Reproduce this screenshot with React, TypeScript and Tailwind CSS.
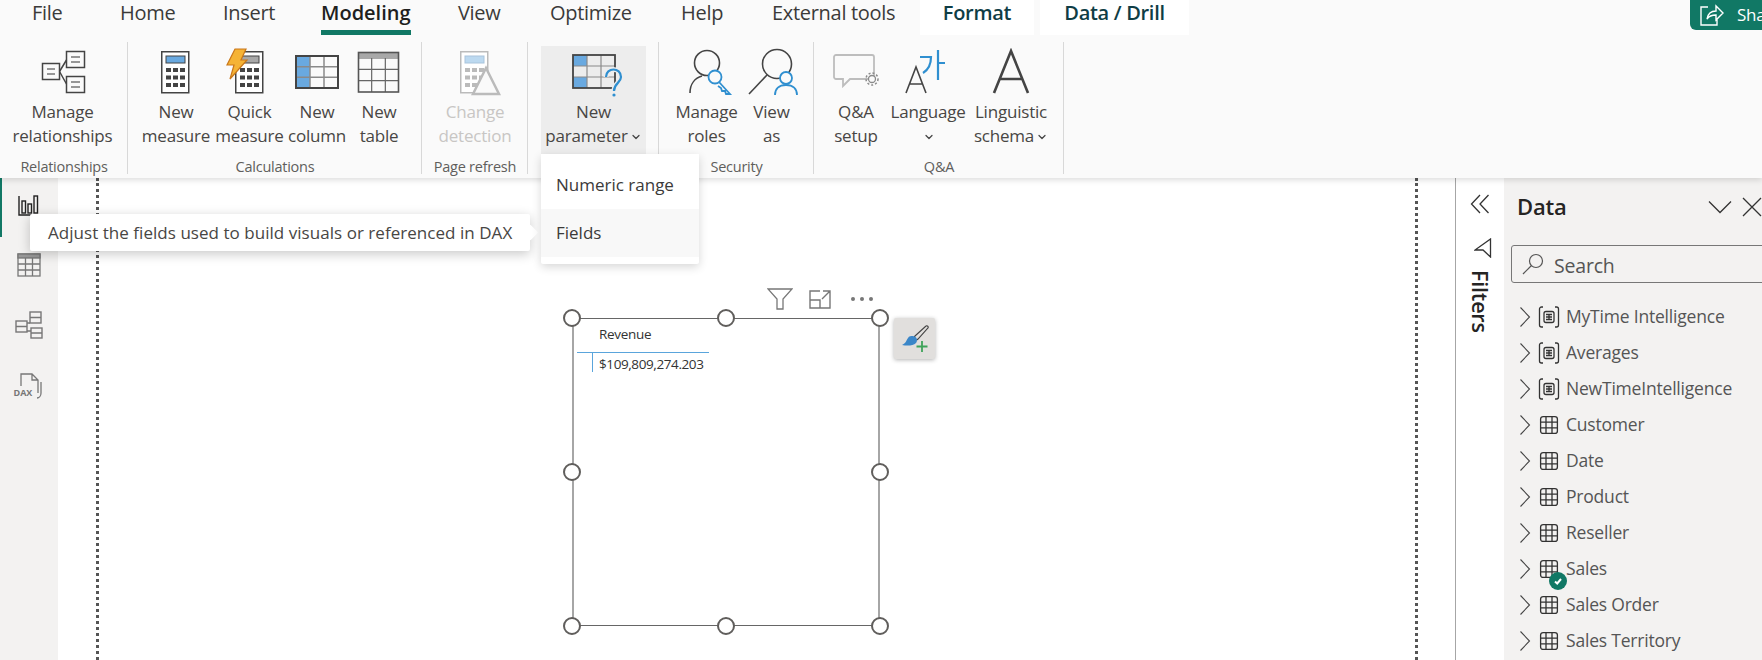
import React from "react";
import { ChevronDown } from "lucide-react";

const tabs = [
  { label: "File", className: "w-[30px] ml-[32px]" },
  { label: "Home", className: "w-[55px] ml-[58px]" },
  { label: "Insert", className: "w-[51px] ml-[48px]" },
  { label: "Modeling", className: "w-[90px] ml-[47px] font-semibold tracking-[0px] text-[#201f1e]" },
  { label: "View", className: "w-[44px] ml-[47px]" },
  { label: "Optimize", className: "w-[83px] ml-[48px]" },
  { label: "Help", className: "w-[42px] ml-[48px]" },
  { label: "External tools", className: "w-[124px] ml-[49px]" },
];

const Stroke = "#444";

const RelationshipsIcon = () => (
  <svg width="60" height="48" viewBox="0 0 60 48" fill="none" stroke={Stroke} strokeWidth="1.5">
    <rect x="9.5" y="15.5" width="17" height="16" fill="#fafafa" />
    <rect x="33.5" y="3.5" width="18" height="16" fill="#fafafa" />
    <rect x="33.5" y="28.500" width="18" height="16" fill="#fafafa" />
    <path d="M26.500 23.500 33.500 12M26.500 23.500 33.500 36" />
    <path d="M14 21h8M14 26h8M38 9h9M38 14h9M38 34h9M38 39h9" stroke="#777" />
  </svg>
);

const Calculator = ({ x, screen, dim }: { x: number; screen: string; dim?: boolean }) => {
  const dots = [0, 1, 2].flatMap((r) => [0, 1, 2].map((c) => ({ r, c })));
  return (
    <g>
      <rect x={x + 0.75} y="3.75" width="27" height="41" fill="#fff" stroke={dim ? "#bbb" : Stroke} strokeWidth="1.5" />
      <rect x={x + 5} y="8" width="19" height="7" fill={screen} stroke={dim ? "#a9c4dc" : "#444"} strokeWidth="1" />
      {dots.map((d) => (
        <rect key={`${d.r}${d.c}`} x={x + 5 + d.c * 7} y={20 + d.r * 7.5} width="5" height="4" fill={dim ? "#bbb" : "#444"} />
      ))}
    </g>
  );
};

const MeasureIcon = () => (
  <svg width="60" height="48" viewBox="0 0 60 48">
    <Calculator x={15} screen="#69a9e0" />
  </svg>
);

const QuickIcon = () => (
  <svg width="60" height="48" viewBox="0 0 60 48">
    <Calculator x={15} screen="#a8a8a8" />
    <path d="M15 1h11l-5 11h6L10 31l4-14H7z" fill="#f5b335" stroke="#c9771a" strokeWidth="1.2" />
  </svg>
);

const GridLines = ({ x, y, w, h, cols, rows }: { x: number; y: number; w: number; h: number; cols: number; rows: number }) => (
  <g>
    {Array.from({ length: cols - 1 }, (_, i) => (
      <line key={`c${i}`} x1={x + ((i + 1) * w) / cols} x2={x + ((i + 1) * w) / cols} y1={y} y2={y + h} />
    ))}
    {Array.from({ length: rows - 1 }, (_, i) => (
      <line key={`r${i}`} x1={x} x2={x + w} y1={y + ((i + 1) * h) / rows} y2={y + ((i + 1) * h) / rows} />
    ))}
  </g>
);

const ColumnIcon = () => (
  <svg width="60" height="48" viewBox="0 0 60 48">
    <rect x="9" y="8" width="14" height="32" fill="#69a9e0" />
    <g stroke="#8a8a8a" strokeWidth="1.5">
      <GridLines x={9} y={8} w={42} h={32} cols={3} rows={3} />
    </g>
    <rect x="9" y="8" width="42" height="32" fill="none" stroke="#444" strokeWidth="2" />
  </svg>
);

const TableIcon = () => (
  <svg width="60" height="48" viewBox="0 0 60 48">
    <rect x="9" y="4" width="41" height="7" fill="#a8a8a8" />
    <g stroke="#666" strokeWidth="1.2">
      <GridLines x={9} y={10} w={41} h={34} cols={3} rows={3} />
    </g>
    <rect x="9.500" y="4.500" width="40" height="39.500" fill="none" stroke="#555" strokeWidth="1.6" />
  </svg>
);

const ChangeIcon = () => (
  <svg width="60" height="48" viewBox="0 0 60 48">
    <Calculator x={15} screen="#bcd9f0" dim />
    <path d="M41 20 54 46H28z" fill="#fafafa" stroke="#bbb" strokeWidth="2.5" />
  </svg>
);

const ParameterIcon = () => (
  <svg width="60" height="50" viewBox="0 0 60 50">
    <rect x="9" y="7" width="14" height="11" fill="#69a9e0" />
    <rect x="9" y="29" width="14" height="11" fill="#69a9e0" />
    <g stroke="#8a8a8a" strokeWidth="1.2">
      <GridLines x={9} y={7} w={42} h={33} cols={3} rows={3} />
    </g>
    <rect x="9" y="7" width="42" height="33" fill="none" stroke="#444" strokeWidth="1.8" />
    <path d="M42 29c0-10 15-10 15 0 0 6-7 6-7 14" fill="none" stroke="#ededed" strokeWidth="5" />
    <path d="M42 29c0-10 15-10 15 0 0 6-7 6-7 14" fill="none" stroke="#2f8fd0" strokeWidth="2.2" />
    <circle cx="50" cy="47" r="1.6" fill="#2f8fd0" />
  </svg>
);

const RolesIcon = () => (
  <svg width="60" height="48" viewBox="0 0 60 48" fill="none">
    <circle cx="30" cy="15" r="12.500" stroke="#444" strokeWidth="1.6" />
    <path d="M13 45c0-9 5-15 12-17" stroke="#444" strokeWidth="1.6" />
    <circle cx="38" cy="29" r="6.500" stroke="#2f8fd0" strokeWidth="1.8" fill="#fafafa" />
    <path d="M42 34 53 46h-4l-1-3h-3l-1-3-3-2" stroke="#2f8fd0" strokeWidth="1.8" />
  </svg>
);

const ViewAsIcon = () => (
  <svg width="60" height="48" viewBox="0 0 60 48" fill="none">
    <circle cx="35" cy="16" r="14.500" stroke="#444" strokeWidth="1.6" />
    <path d="M25 27 7 46" stroke="#444" strokeWidth="1.6" />
    <circle cx="44" cy="30" r="6" stroke="#2f8fd0" strokeWidth="1.8" fill="#fafafa" />
    <path d="M33 47c0-6 4-10 11-10s11 4 11 10" stroke="#2f8fd0" strokeWidth="1.8" />
  </svg>
);

const QnaIcon = () => (
  <svg width="60" height="48" viewBox="0 0 60 48" fill="none">
    <path d="M10 7h36a2 2 0 0 1 2 2v20a2 2 0 0 1-2 2H24l-7 7v-7h-7a2 2 0 0 1-2-2V9a2 2 0 0 1 2-2z" stroke="#bdbdbd" strokeWidth="1.8" fill="#fafafa" />
    <circle cx="46" cy="31" r="3.500" stroke="#8a8a8a" strokeWidth="1.3" fill="#fafafa" />
    <circle cx="46" cy="31" r="6" stroke="#8a8a8a" strokeWidth="1.5" strokeDasharray="2 2" />
  </svg>
);

const LanguageIcon = () => (
  <svg width="60" height="48" viewBox="0 0 60 48" fill="none">
    <path d="M8 45 18 19l10 26M11.500 36h13" stroke="#444" strokeWidth="1.6" />
    <path d="M22 9h11c0 8-3 13-8 16M40 2v30M40 15h7" stroke="#2f8fd0" strokeWidth="2.2" />
  </svg>
);

const SchemaIcon = () => (
  <svg width="60" height="48" viewBox="0 0 60 48" fill="none">
    <path d="M13 45 30 3l17 42M18 31h24" stroke="#444" strokeWidth="2.6" />
  </svg>
);

const SmallChevron = () => <ChevronDown size={12} strokeWidth={2.5} className="ml-[2px] inline-block text-[#444]" />;

const RibbonItem = ({ w, icon, top, bottom, dim }: { w: string; icon: React.ReactNode; top: string; bottom: React.ReactNode; dim?: boolean }) => (
  <div className={`flex flex-col items-center ${w} ${dim ? "text-[#c8c6c4]" : "text-[#484644]"}`}>
    <div className="flex h-[52px] w-full items-start justify-center">{icon}</div>
    <div className="h-[24px] whitespace-nowrap text-[17px] leading-[24px] tracking-[-0.2px]">{top}</div>
    <div className="h-[24px] whitespace-nowrap text-[17px] leading-[24px] tracking-[-0.2px]">{bottom}</div>
  </div>
);

const RibbonGroup = ({ w, label, children }: { w: string; label?: string; children: React.ReactNode }) => (
  <div className={`relative flex h-full flex-col items-center ${w}`}>
    <div className="flex h-[106px] justify-center">{children}</div>
    <div className="mt-[3px] text-[14.5px] leading-[20px] tracking-[-0.25px] text-[#605e5c]">{label}</div>
    <div className="absolute -top-[6px] right-0 h-[132px] w-px bg-[#d8d8d8]" />
  </div>
);

const BarsIcon = () => (
  <svg width="22" height="22" viewBox="0 0 22 22" fill="none" stroke="#222" strokeWidth="1.4">
    <path d="M1 1v19h19" />
    <rect x="4" y="6" width="3.500" height="12" />
    <rect x="10" y="9" width="3.500" height="9" />
    <rect x="16" y="1" width="3.500" height="17" />
  </svg>
);

const RailTableIcon = () => (
  <svg width="26" height="26" viewBox="0 0 26 26" fill="none" stroke="#777" strokeWidth="1.3">
    <rect x="2" y="2" width="22" height="22" />
    <rect x="2" y="2" width="22" height="4" fill="#999" />
    <path d="M9.500 6v18M16.500 6v18M2 12h22M2 18h22" />
  </svg>
);

const RailModelIcon = () => (
  <svg width="28" height="28" viewBox="0 0 28 28" fill="none" stroke="#777" strokeWidth="1.4">
    <rect x="1" y="10" width="11" height="11" fill="#f3f2f1" />
    <rect x="15" y="1" width="11" height="11" fill="#f3f2f1" />
    <rect x="16" y="17" width="11" height="10" fill="#f3f2f1" />
    <path d="M1 15.500h11M15 6.500h11M16 22h11M12 12h3M12 20h4" />
  </svg>
);

const RailDaxIcon = () => (
  <div className="relative h-[28px] w-[28px]">
    <svg width="28" height="28" viewBox="0 0 28 28" fill="none" stroke="#777" strokeWidth="1.3" className="absolute left-0 top-0">
      <path d="M7 14V2h11l6 6v13M18 2v6h6M27 10v11c0 3-2 5-4 5" />
    </svg>
    <span className="absolute left-0 top-[16px] text-[9px] font-bold leading-[10px] text-[#777]">DAX</span>
  </div>
);

const TableGlyph = () => (
  <svg width="20" height="20" viewBox="0 0 20 20" fill="none" stroke="#333" strokeWidth="1.3">
    <rect x="1.600" y="1.600" width="16.800" height="16.800" rx="2.500" />
    <path d="M7 1.600v16.800M13 1.600v16.800M1.600 7.200h16.800M1.600 12.800h16.800" />
  </svg>
);

const MeasureGlyph = () => (
  <svg width="22" height="22" viewBox="0 0 22 22" fill="none" stroke="#333" strokeWidth="1.3">
    <path d="M5 1H3.500A2 2 0 0 0 1.500 3v16a2 2 0 0 0 2 2H5M17 1h1.500a2 2 0 0 1 2 2v16a2 2 0 0 1-2 2H17" />
    <rect x="6" y="5.500" width="10" height="11" rx="2" />
    <path d="M8 8.500h6M8 11h6M8 13.500h6M11 8.500v5" />
  </svg>
);

const RowChevron = () => (
  <svg width="12" height="22" viewBox="0 0 12 22" fill="none" stroke="#444" strokeWidth="1.1" className="shrink-0">
    <path d="M1.500 1.500 10.500 11 1.500 20.500" />
  </svg>
);

const fields = [
  { name: "MyTime Intelligence", measure: true },
  { name: "Averages", measure: true },
  { name: "NewTimeIntelligence", measure: true },
  { name: "Customer" },
  { name: "Date" },
  { name: "Product" },
  { name: "Reseller" },
  { name: "Sales", badge: true },
  { name: "Sales Order" },
  { name: "Sales Territory" },
];

const FieldRow = ({ name, measure, badge }: { name: string; measure?: boolean; badge?: boolean }) => (
  <div className="relative flex h-[36px] shrink-0 items-center">
    <div className="ml-[15px]">
      <RowChevron />
    </div>
    <div className="ml-[6px] flex w-[24px] justify-center">{measure ? <MeasureGlyph /> : <TableGlyph />}</div>
    <span className="ml-[5px] -mt-[2px] whitespace-nowrap text-[17.5px] tracking-[-0.2px] text-[#555]">{name}</span>
    {badge && (
      <div className="absolute left-[45px] top-[21px] flex h-[18px] w-[18px] items-center justify-center rounded-full bg-[#117865]">
        <svg width="10" height="10" viewBox="0 0 10 10" fill="none" stroke="#fff" strokeWidth="2">
          <path d="M2 5.500 4.200 7.500 8 3" />
        </svg>
      </div>
    )}
  </div>
);

const Handle = ({ className }: { className: string }) => (
  <div className={`absolute h-[18px] w-[18px] rounded-full border-2 border-[#605e5c] bg-white ${className}`} />
);

const VisualFrame = () => (
  <div className="absolute left-[514px] top-[140px] h-[308px] w-[308px]">
    <div className="absolute inset-0 border-x-2 border-y border-x-[#a6a6a6] border-y-[#666]" />
    <div className="absolute left-[27px] top-[7px] text-[13.5px] leading-[18px] tracking-[-0.3px] text-[#333]">Revenue</div>
    <div className="absolute left-[5px] top-[34px] h-px w-[132px] bg-[#5aa5dc]" />
    <div className="absolute left-[20px] top-[34px] h-[20px] w-px bg-[#5aa5dc]" />
    <div className="absolute left-[27px] top-[37px] text-[13.5px] leading-[18px] tracking-[-0.4px] text-[#333]">$109,809,274.203</div>

    <Handle className="-left-[9px] -top-[9px]" />
    <Handle className="left-[145px] -top-[9px]" />
    <Handle className="-right-[9px] -top-[9px]" />
    <Handle className="-left-[9px] top-[145px]" />
    <Handle className="-right-[9px] top-[145px]" />
    <Handle className="-left-[9px] -bottom-[9px]" />
    <Handle className="left-[145px] -bottom-[9px]" />
    <Handle className="-right-[9px] -bottom-[9px]" />

    <div className="absolute -top-[31px] left-[195px] flex items-center">
      <svg width="26" height="24" viewBox="0 0 26 24" fill="none" stroke="#777" strokeWidth="1.3">
        <path d="M1 2h24l-9 10v10h-6V12z" />
      </svg>
      <svg width="24" height="20" viewBox="0 0 24 20" fill="none" stroke="#777" strokeWidth="1.4" className="ml-[15px]">
        <path d="M12 2H2v17h20V8M2 11h10v8M15 2h7v6M22 2l-8 8" />
      </svg>
      <div className="ml-[19px] flex gap-[5px]">
        <div className="h-[4px] w-[4px] rounded-full bg-[#777]" />
        <div className="h-[4px] w-[4px] rounded-full bg-[#777]" />
        <div className="h-[4px] w-[4px] rounded-full bg-[#777]" />
      </div>
    </div>

    <div className="absolute left-[322px] top-0 flex h-[41px] w-[41px] items-center justify-center rounded-[2px] bg-[#e1dfdd] shadow-[0_1px_4px_rgba(0,0,0,0.3)]">
      <svg width="30" height="30" viewBox="0 0 30 30" fill="none">
        <path d="M26 2 15 12c-1 1-1 2 0 3 1 1 2 1 3 0L28 4c1-1-1-3-2-2z" stroke="#444" strokeWidth="1.1" />
        <path d="M13 12c4 1 5 4 3 7-3 3-9 3-14 2 4-2 4-4 6-7 1-2 3-2 5-2z" fill="#3a86c8" />
        <path d="M22 17v11M16.500 22.500h11" stroke="#3fa35a" strokeWidth="1.800" />
      </svg>
    </div>
  </div>
);

const App: React.FC = () => (
  <div className="relative flex h-[660px] w-[1762px] flex-col overflow-hidden bg-white font-['Open_Sans',sans-serif]">
    <header className="relative z-10 h-[178px] shrink-0 bg-[#fafafa] shadow-[0_2px_6px_rgba(0,0,0,0.14)]">
      <nav className="relative flex h-[36px] items-start">
        {tabs.map((t) => (
          <div key={t.label} className={`whitespace-nowrap text-[20px] leading-[26px] tracking-[-0.3px] text-[#3b3a39] ${t.className}`}>
            {t.label}
          </div>
        ))}
        <div className="ml-[24px] h-[35px] w-[114px] bg-white text-center text-[20px] font-semibold leading-[26px] tracking-[-0.3px] text-[#0f3d45]">Format</div>
        <div className="ml-[6px] h-[35px] w-[149px] bg-white text-center text-[20px] font-semibold leading-[26px] tracking-[-0.3px] text-[#0f3d45]">Data / Drill</div>
        <div className="absolute left-[321px] top-[30px] h-[5px] w-[90px] bg-[#117865]" />
        <div className="absolute left-[1690px] top-0 flex h-[30px] w-[72px] items-center overflow-hidden rounded-bl-md bg-[#117865] pl-[10px] text-white">
          <svg width="24" height="22" viewBox="0 0 24 22" fill="none" stroke="#fff" strokeWidth="1.4" className="shrink-0">
            <path d="M8 3H1v18h16v-6M7 15c1-6 5-8 9-8V2l7 7-7 7v-5c-3 0-7 1-9 4z" />
          </svg>
          <span className="ml-[13px] whitespace-nowrap text-[17px] tracking-[-0.3px]">Share</span>
        </div>
      </nav>
      <div className="flex h-[142px] pt-[12px]">
        <RibbonGroup w="w-[128px]" label="Relationships">
          <div className="pr-[3px]">
            <RibbonItem w="w-[124px]" icon={<RelationshipsIcon />} top="Manage" bottom="relationships" />
          </div>
        </RibbonGroup>
        <RibbonGroup w="w-[294px]" label="Calculations">
          <div className="flex pr-[3px]">
            <RibbonItem w="w-[76px]" icon={<MeasureIcon />} top="New" bottom="measure" />
            <RibbonItem w="w-[71px]" icon={<QuickIcon />} top="Quick" bottom="measure" />
            <RibbonItem w="w-[64px]" icon={<ColumnIcon />} top="New" bottom="column" />
            <RibbonItem w="w-[60px]" icon={<TableIcon />} top="New" bottom="table" />
          </div>
        </RibbonGroup>
        <RibbonGroup w="w-[106px]" label="Page refresh">
          <RibbonItem w="w-[100px]" icon={<ChangeIcon />} top="Change" bottom="detection" dim />
        </RibbonGroup>
        <RibbonGroup w="w-[131px]">
          <div className="-mt-[2px] h-[108px] w-[105px] bg-[#ededed] pt-[2px]">
            <RibbonItem
              w="w-[105px]"
              icon={<ParameterIcon />}
              top="New"
              bottom={
                <span>
                  parameter
                  <SmallChevron />
                </span>
              }
            />
          </div>
        </RibbonGroup>
        <RibbonGroup w="w-[155px]" label="Security">
          <RibbonItem w="w-[70px]" icon={<RolesIcon />} top="Manage" bottom="roles" />
          <RibbonItem w="w-[60px]" icon={<ViewAsIcon />} top="View" bottom="as" />
        </RibbonGroup>
        <RibbonGroup w="w-[250px]" label="Q&A">
          <RibbonItem w="w-[78px]" icon={<QnaIcon />} top="Q&A" bottom="setup" />
          <RibbonItem w="w-[66px]" icon={<LanguageIcon />} top="Language" bottom={<SmallChevron />} />
          <RibbonItem
            w="w-[100px]"
            icon={<SchemaIcon />}
            top="Linguistic"
            bottom={
              <span>
                schema
                <SmallChevron />
              </span>
            }
          />
        </RibbonGroup>
      </div>
    </header>

    <main className="flex min-h-0 flex-1">
      <aside className="relative flex w-[58px] shrink-0 flex-col items-center bg-[#f3f2f1]">
        <div className="absolute left-0 top-0 h-[59px] w-[2px] bg-[#117865]" />
        <div className="mt-[17px] h-[22px]">
          <BarsIcon />
        </div>
        <div className="mt-[35px]">
          <RailTableIcon />
        </div>
        <div className="mt-[33px]">
          <RailModelIcon />
        </div>
        <div className="mt-[33px] mr-[3px]">
          <RailDaxIcon />
        </div>
      </aside>

      <section className="relative flex-1 bg-white">
        <div className="ml-[38px] h-full w-[1322px] border-x-[3px] border-dotted border-x-[#555]" />
        <VisualFrame />
      </section>

      <div className="flex w-[49px] shrink-0 flex-col items-center border-l border-[#a6a6a6] bg-white">
        <svg width="20" height="20" viewBox="0 0 20 20" fill="none" stroke="#333" strokeWidth="1.300" className="mt-[16px]">
          <path d="M10 1 1.500 10 10 19M18.500 1 10 10l8.500 9" />
        </svg>
        <svg width="18" height="20" viewBox="0 0 18 20" fill="none" stroke="#333" strokeWidth="1.300" className="ml-[6px] mt-[24px]">
          <path d="M16.500 1v18l-7.500-7H1z" />
        </svg>
        <span className="mt-[12px] text-[21.5px] font-semibold leading-[24px] tracking-[-0.2px] text-[#252423] [writing-mode:vertical-rl]">Filters</span>
      </div>

      <aside className="flex w-[258px] shrink-0 flex-col overflow-hidden bg-[#f3f2f1]">
        <div className="flex h-[58px] shrink-0 items-center pl-[13px] pb-[1px]">
          <span className="w-[191px] text-[22px] font-semibold tracking-[-0.2px] text-[#252423]">Data</span>
          <svg width="24" height="14" viewBox="0 0 24 14" fill="none" stroke="#333" strokeWidth="1.300" className="shrink-0">
            <path d="M1 1.500 12 12.500 23 1.500" />
          </svg>
          <svg width="20" height="20" viewBox="0 0 20 20" fill="none" stroke="#333" strokeWidth="1.300" className="ml-[10px] shrink-0">
            <path d="M1 1l18 18M19 1 1 19" />
          </svg>
        </div>
        <div className="ml-[7px] mt-[9px] flex h-[38px] w-[300px] shrink-0 items-center rounded-[3px] border border-[#777] bg-[#f3f2f1] pl-[10px]">
          <svg width="22" height="22" viewBox="0 0 22 22" fill="none" stroke="#555" strokeWidth="1.200" className="shrink-0">
            <circle cx="14" cy="8" r="6.500" />
            <path d="M9.500 12.500 1 21" />
          </svg>
          <span className="ml-[10px] mt-[4px] text-[19.5px] tracking-[-0.2px] text-[#555]">Search</span>
        </div>
        <div className="mt-[16px] flex flex-col">
          {fields.map((f) => (
            <FieldRow key={f.name} {...f} />
          ))}
        </div>
      </aside>
    </main>

    <div className="absolute left-[30px] top-[214px] z-20 flex h-[37px] w-[500px] items-center rounded-[2px] bg-white pl-[18px] shadow-[0_3px_12px_rgba(0,0,0,0.22)]">
      <span className="whitespace-nowrap text-[17px] tracking-[0.04px] text-[#484644]">Adjust the fields used to build visuals or referenced in DAX</span>
      <div className="absolute -right-[6px] top-[13px] h-[11px] w-[11px] rotate-45 bg-white" />
    </div>

    <div className="absolute left-[541px] top-[154px] z-20 h-[110px] w-[158px] rounded-b-[2px] bg-white shadow-[0_3px_10px_rgba(0,0,0,0.16)]">
      <div className="flex h-[55px] items-center pl-[15px] pt-[6px] text-[17px] text-[#3b3a39]">Numeric range</div>
      <div className="flex h-[48px] items-center bg-[#f8f8f8] pl-[15px] text-[17px] text-[#3b3a39]">Fields</div>
    </div>
  </div>
);

export default App;
